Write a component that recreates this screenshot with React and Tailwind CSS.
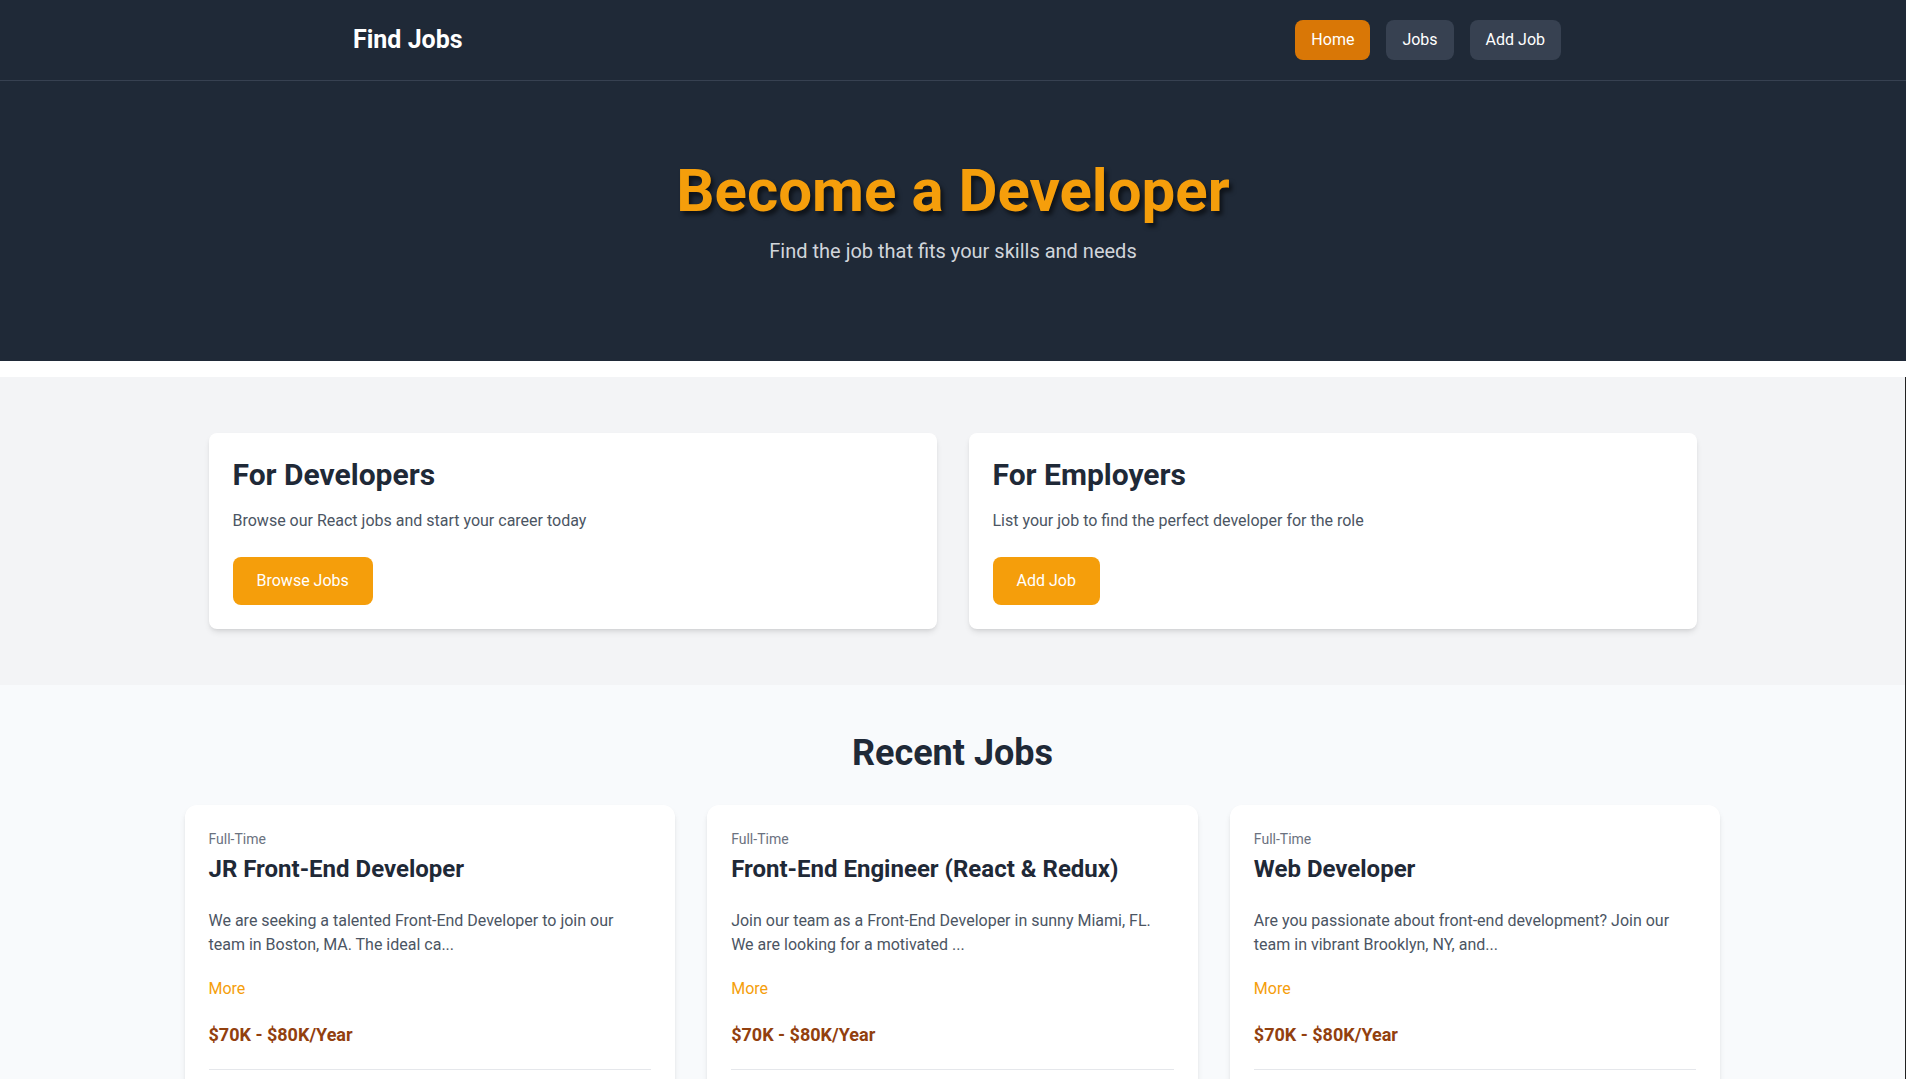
import React from 'react';

const jobs = [
  {
    id: 1,
    type: 'Full-Time',
    title: 'JR Front-End Developer',
    description:
      'We are seeking a talented Front-End Developer to join our team in Boston, MA. The ideal ca...',
    salary: '$70K - $80K/Year',
  },
  {
    id: 2,
    type: 'Full-Time',
    title: 'Front-End Engineer (React & Redux)',
    description:
      'Join our team as a Front-End Developer in sunny Miami, FL. We are looking for a motivated ...',
    salary: '$70K - $80K/Year',
  },
  {
    id: 3,
    type: 'Full-Time',
    title: 'Web Developer',
    description:
      'Are you passionate about front-end development? Join our team in vibrant Brooklyn, NY, and...',
    salary: '$70K - $80K/Year',
  },
];

const Navbar = () => (
  <nav className="bg-[#1f2937] border-b border-[#374151]">
    <div className="max-w-7xl mx-auto px-8">
      <div className="flex h-20 items-center justify-between">
        <a href="#" className="ml-2 text-[25px] font-bold text-white">Find Jobs</a>
        <div className="flex gap-4">
          <a href="#" className="px-4 py-2 rounded-lg bg-[#d97706] text-white">Home</a>
          <a href="#" className="px-4 py-2 rounded-lg bg-[#374151] text-white">Jobs</a>
          <a href="#" className="px-4 py-2 rounded-lg bg-[#374151] text-white">Add Job</a>
        </div>
      </div>
    </div>
  </nav>
);

const Hero = () => (
  <section className="bg-[#1f2937] py-20 mb-4">
    <div className="text-center">
      <h1 className="text-6xl leading-none font-bold text-[#f59e0b] [text-shadow:3px_4px_4px_rgba(0,0,0,0.55)]">
        Become a Developer
      </h1>
      <p className="my-4 text-xl text-[#d1d5db]">Find the job that fits your skills and needs</p>
    </div>
  </section>
);

const Card = ({ title, text, button }) => (
  <div className="bg-white p-6 rounded-lg shadow-md">
    <h2 className="text-3xl font-bold text-[#1f2937]">{title}</h2>
    <p className="mt-4 mb-6 text-[#4b5563]">{text}</p>
    <a href="#" className="inline-block bg-[#f59e0b] text-white rounded-lg px-6 py-3">{button}</a>
  </div>
);

const JobListing = ({ job }) => (
  <div className="bg-white rounded-xl shadow-md">
    <div className="p-6">
      <div className="mb-6">
        <div className="text-sm text-[#6b7280] mb-1">{job.type}</div>
        <h3 className="text-2xl font-bold text-[#1f2937]">{job.title}</h3>
      </div>
      <div className="mb-5 text-[#4b5563]">{job.description}</div>
      <button className="block text-[#f59e0b] mb-5">More</button>
      <h3 className="text-lg font-bold text-[#92400e] mb-5">{job.salary}</h3>
      <div className="border-t border-[#e5e7eb] mb-5"></div>
      <div className="h-16"></div>
    </div>
  </div>
);

export default function App() {
  return (
    <div className="min-h-screen bg-white font-['Roboto',sans-serif]">
      <Navbar />
      <Hero />
      <div className="border-r border-[#222]">
        <section className="bg-[#f3f4f6] py-14">
          <div className="container mx-auto px-6">
            <div className="grid grid-cols-2 gap-8">
              <Card
                title="For Developers"
                text="Browse our React jobs and start your career today"
                button="Browse Jobs"
              />
              <Card
                title="For Employers"
                text="List your job to find the perfect developer for the role"
                button="Add Job"
              />
            </div>
          </div>
        </section>
        <section className="bg-[#f8fafc] pt-12 pb-10">
          <div className="container mx-auto">
            <h2 className="text-4xl font-bold text-[#1f2937] mb-8 text-center">Recent Jobs</h2>
            <div className="grid grid-cols-3 gap-8">
              {jobs.map((job) => (
                <JobListing key={job.id} job={job} />
              ))}
            </div>
          </div>
        </section>
      </div>
    </div>
  );
}
